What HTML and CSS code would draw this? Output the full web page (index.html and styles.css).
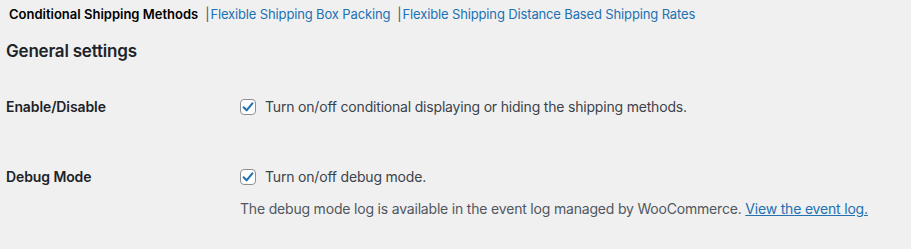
FILE: index.html
```html
<!DOCTYPE html>
<html>
<head>
<meta charset="utf-8">
<link rel="stylesheet" href="styles.css">
</head>
<body>
<div class="wrap">
  <ul class="subnav">
    <li><span class="current">Conditional Shipping Methods</span><span class="sep">|</span></li>
    <li><a href="#">Flexible Shipping Box Packing</a><span class="sep">|</span></li>
    <li><a href="#">Flexible Shipping Distance Based Shipping Rates</a></li>
  </ul>
  <h2 class="section-title">General settings</h2>
  <div class="form-table">
    <div class="row row-first">
      <div class="label">Enable/Disable</div>
      <div class="field">
        <label class="check"><span class="box"><svg viewBox="0 0 16 16" width="16" height="16"><path d="M3.6 8.3 L6.6 11.3 L12.4 4.3" fill="none" stroke="#2271b1" stroke-width="2.1" stroke-linecap="round" stroke-linejoin="round"/></svg></span>Turn on/off conditional displaying or hiding the shipping methods.</label>
      </div>
    </div>
    <div class="row row-second">
      <div class="label">Debug Mode</div>
      <div class="field">
        <label class="check"><span class="box"><svg viewBox="0 0 16 16" width="16" height="16"><path d="M3.6 8.3 L6.6 11.3 L12.4 4.3" fill="none" stroke="#2271b1" stroke-width="2.1" stroke-linecap="round" stroke-linejoin="round"/></svg></span>Turn on/off debug mode.</label>
        <p class="description">The debug mode log is available in the event log managed by WooCommerce. <a href="#" class="ul">View the event log.</a></p>
      </div>
    </div>
  </div>
</div>
</body>
</html>
```

FILE: styles.css
```css
html, body {
  margin: 0;
  padding: 0;
  background: #f0f0f1;
}
body {
  font-family: Inter, "Noto Sans", sans-serif;
  color: #3c434a;
  font-size: 14px;
  letter-spacing: -0.19px;
}
.wrap {
  padding: 0 0 0 6px;
}
.subnav {
  list-style: none;
  margin: 0;
  padding: 6px 0 0 3px;
  display: flex;
  font-size: 13px;
  line-height: 16px;
  letter-spacing: -0.14px;
}
.subnav li {
  display: flex;
}
.current {
  font-weight: 600;
  color: #000;
  letter-spacing: 0;
}
.sep {
  color: #50575e;
  margin: 0 1px 0 7px;
}
.subnav a {
  color: #2271b1;
  text-decoration: none;
}
.section-title {
  margin: 18px 0 0;
  font-size: 17px;
  line-height: 22px;
  font-weight: 600;
  color: #1d2327;
  letter-spacing: -0.2px;
}
.row {
  display: flex;
}
.row-first {
  margin-top: 35px;
}
.row-second {
  margin-top: 50px;
}
.label {
  width: 234px;
  flex: none;
  font-weight: 600;
  color: #1d2327;
  line-height: 20px;
  letter-spacing: -0.1px;
}
.check {
  display: flex;
  align-items: center;
  line-height: 20px;
}
.box {
  width: 14px;
  height: 14px;
  border: 1px solid #8c8f94;
  border-radius: 4px;
  background: #fff;
  margin-right: 9px;
  display: flex;
  align-items: center;
  justify-content: center;
}
.box svg {
  flex: none;
}
.description {
  margin: 12px 0 0;
  line-height: 20px;
  color: #50575e;
}
.ul {
  color: #2271b1;
  text-decoration: underline;
}
```
